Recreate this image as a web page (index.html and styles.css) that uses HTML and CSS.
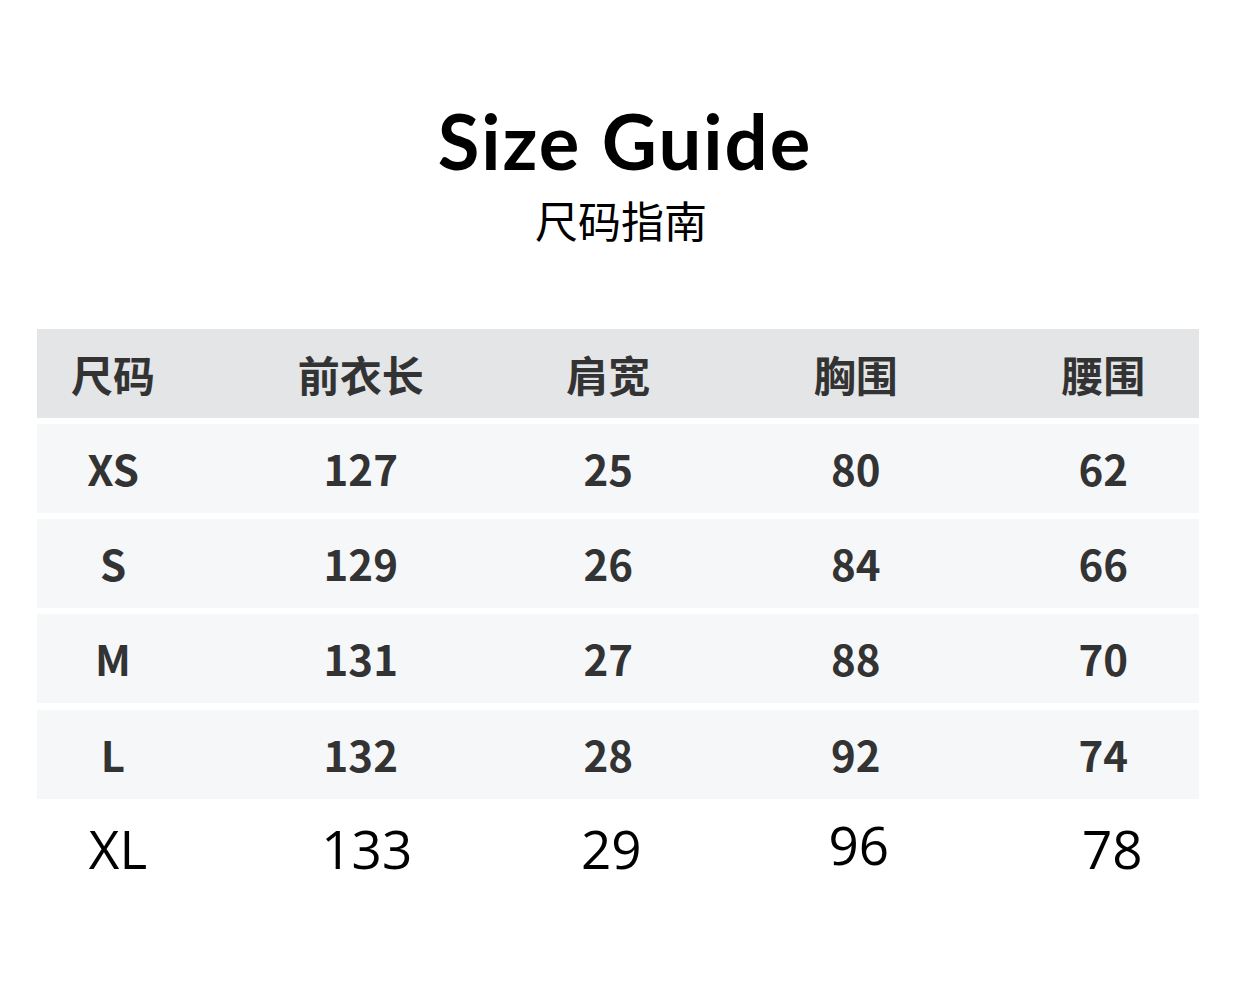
FILE: index.html
```html
<!DOCTYPE html>
<html lang="zh">
<head>
<meta charset="utf-8">
<title>Size Guide</title>
<link rel="stylesheet" href="styles.css">
</head>
<body>
<div class="page">
  <header class="intro">
    <h1 class="title">Size Guide</h1>
    <p class="subtitle">尺码指南</p>
  </header>
  <div class="table">
    <div class="row head">
      <div class="cell">尺码</div><div class="cell">前衣长</div><div class="cell">肩宽</div><div class="cell">胸围</div><div class="cell">腰围</div>
    </div>
    <div class="row body">
      <div class="cell">XS</div><div class="cell">127</div><div class="cell">25</div><div class="cell">80</div><div class="cell">62</div>
    </div>
    <div class="row body">
      <div class="cell">S</div><div class="cell">129</div><div class="cell">26</div><div class="cell">84</div><div class="cell">66</div>
    </div>
    <div class="row body">
      <div class="cell">M</div><div class="cell">131</div><div class="cell">27</div><div class="cell">88</div><div class="cell">70</div>
    </div>
    <div class="row body last-shaded">
      <div class="cell">L</div><div class="cell">132</div><div class="cell">28</div><div class="cell">92</div><div class="cell">74</div>
    </div>
    <div class="row plain">
      <div class="cell xl">XL</div><div class="cell c133">133</div><div class="cell c29">29</div><div class="cell c96">96</div><div class="cell c78">78</div>
    </div>
  </div>
</div>
</body>
</html>
```
FILE: styles.css
```css
html, body {
  margin: 0;
  padding: 0;
  background: #ffffff;
}
.page {
  width: 1242px;
  height: 1001px;
  overflow: hidden;
}
.intro {
  display: flex;
  flex-direction: column;
  align-items: center;
  padding-top: 96px;
}
.title {
  margin: 0;
  font-family: "Lato", "Noto Sans", sans-serif;
  font-weight: 700;
  font-size: 76px;
  line-height: 90px;
  color: #000;
  letter-spacing: 2px;
  padding-left: 8px;
}
.subtitle {
  margin: 0;
  margin-top: 8px;
  font-family: "Noto Sans CJK SC", sans-serif;
  font-weight: 400;
  font-size: 43px;
  line-height: 50px;
  color: #000;
}
.table {
  margin: 85px 0 0 37px;
  width: 1162px;
  display: flex;
  flex-direction: column;
  gap: 6px;
}
.row {
  display: grid;
  grid-template-columns: 200px 247.5px 247.5px 247.5px 247.5px;
  height: 89px;
  align-items: center;
  font-family: "Noto Sans CJK SC", sans-serif;
  color: #333333;
  box-sizing: border-box;
}
.row .cell {
  text-align: center;
  white-space: nowrap;
}
.row .cell:first-child {
  padding-right: 48px;
}
.head {
  background: #e4e5e7;
  font-size: 42px;
  font-weight: 700;
}
.body {
  background: #f6f7f9;
  font-size: 42px;
  font-weight: 700;
  padding-bottom: 3px;
}
.last-shaded {
  margin-top: 1px;
}
.plain {
  background: transparent;
  font-family: "Open Sans", "Noto Sans", sans-serif;
  font-weight: 400;
  font-size: 53px;
  color: #000;
  height: 86px;
}
.plain .xl { padding-left: 10px; }
.plain .c133 { padding-left: 12px; }
.plain .c29 { padding-left: 6px; }
.plain .c96 { padding-left: 6px; margin-top: -8px; }
.plain .c78 { padding-left: 18px; }
```
